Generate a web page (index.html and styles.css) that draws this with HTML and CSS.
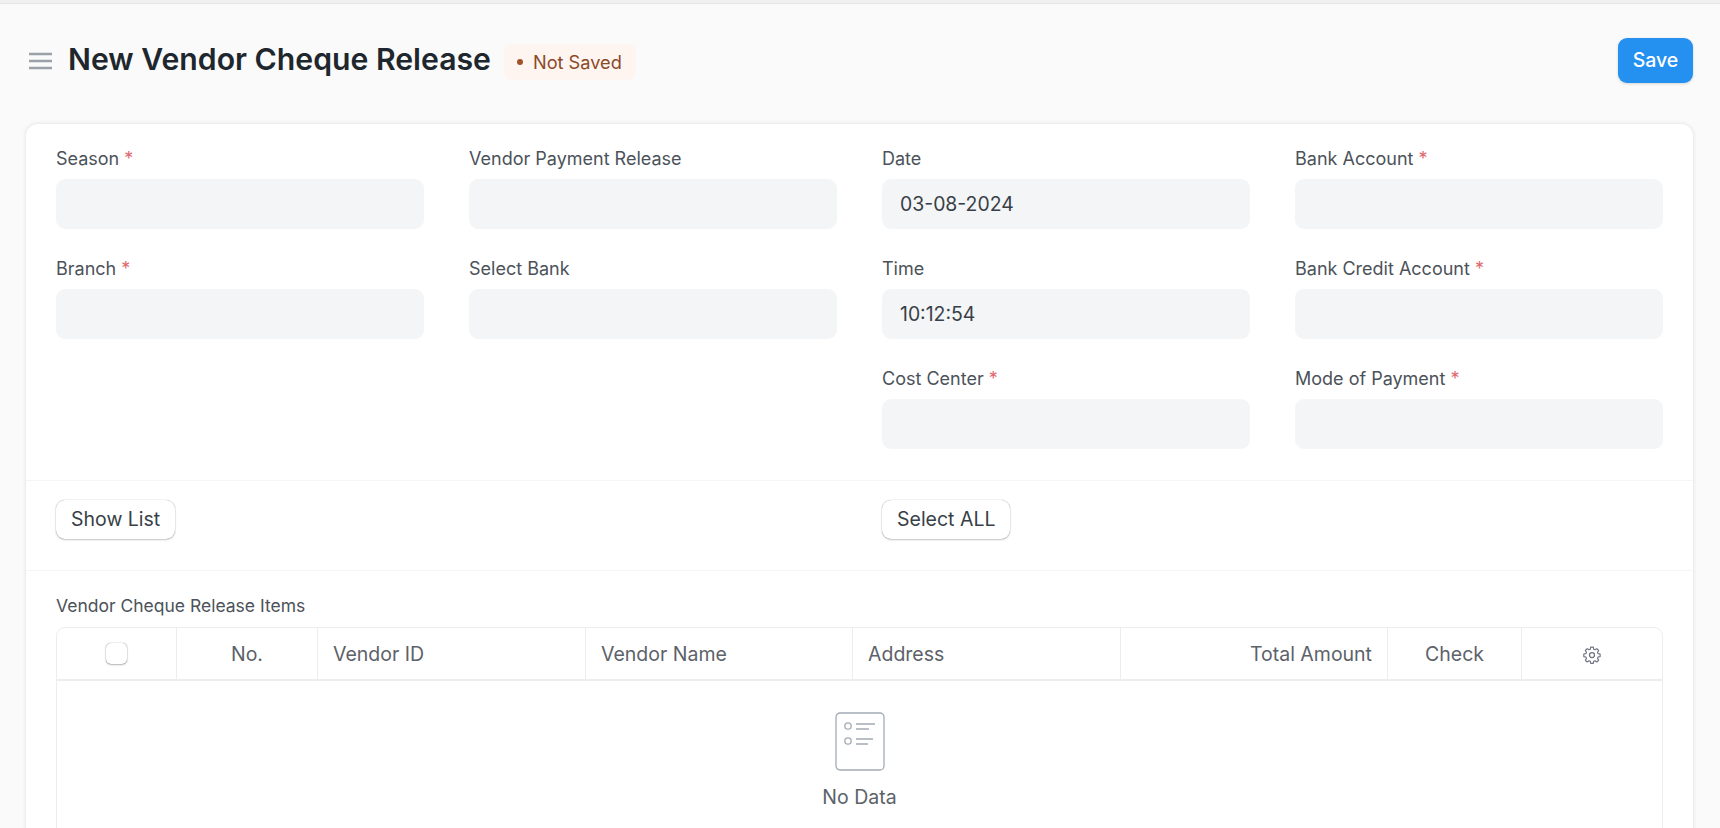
FILE: index.html
```html
<!DOCTYPE html>
<html lang="en">
<head>
    <meta charset="UTF-8">
    <title>New Vendor Cheque Release</title>
    <link rel="stylesheet" href="styles.css">
</head>
<body>
    <div class="navbar-edge"></div>
    <div class="page-head">
        <div class="title-group">
            <svg class="menu-icon" width="24" height="18" viewBox="0 0 24 18" fill="none" stroke="#9aa1a9" stroke-width="2.6">
                <path d="M0 2H23M0 9H23M0 16H23"/>
            </svg>
            <h1>New Vendor Cheque Release</h1>
            <span class="badge"><span class="dot"></span>Not Saved</span>
        </div>
        <button class="btn-primary">Save</button>
    </div>
    <div class="card">
        <div class="section form-grid">
            <div class="field"><label>Season <span class="req">*</span></label><div class="input"></div></div>
            <div class="field"><label>Vendor Payment Release</label><div class="input"></div></div>
            <div class="field"><label>Date</label><div class="input">03-08-2024</div></div>
            <div class="field"><label>Bank Account <span class="req">*</span></label><div class="input"></div></div>
            <div class="field"><label>Branch <span class="req">*</span></label><div class="input"></div></div>
            <div class="field"><label>Select Bank</label><div class="input"></div></div>
            <div class="field"><label>Time</label><div class="input">10:12:54</div></div>
            <div class="field"><label>Bank Credit Account <span class="req">*</span></label><div class="input"></div></div>
            <div class="field spacer"></div>
            <div class="field spacer"></div>
            <div class="field"><label>Cost Center <span class="req">*</span></label><div class="input"></div></div>
            <div class="field"><label>Mode of Payment <span class="req">*</span></label><div class="input"></div></div>
        </div>
        <div class="section button-row">
            <div><button class="btn">Show List</button></div>
            <div><button class="btn">Select ALL</button></div>
        </div>
        <div class="section items">
            <div class="items-label">Vendor Cheque Release Items</div>
            <div class="grid">
                <div class="grid-head">
                    <div class="cell center"><span class="checkbox"></span></div>
                    <div class="cell center">No.</div>
                    <div class="cell">Vendor ID</div>
                    <div class="cell">Vendor Name</div>
                    <div class="cell">Address</div>
                    <div class="cell right">Total Amount</div>
                    <div class="cell center">Check</div>
                    <div class="cell center">
                        <svg class="gear" width="20" height="20" viewBox="0 0 24 24" fill="none" stroke="#6b7280" stroke-width="1.5" stroke-linejoin="round">
                            <path d="M10.3 2.5h3.4l.5 2.7 1.8.8 2.3-1.5 2.4 2.4-1.5 2.3.7 1.8 2.7.5v3.4l-2.7.5-.7 1.8 1.5 2.3-2.4 2.4-2.3-1.5-1.8.7-.5 2.7h-3.4l-.5-2.7-1.8-.7-2.3 1.5-2.4-2.4 1.5-2.3-.8-1.8-2.7-.5v-3.4l2.7-.5.8-1.8-1.5-2.3 2.4-2.4 2.3 1.5 1.8-.8z" transform="translate(12 12) scale(.92) translate(-12 -12.8)"/>
                            <circle cx="12" cy="12" r="3"/>
                        </svg>
                    </div>
                </div>
                <div class="empty">
                    <svg width="50" height="59" viewBox="0 0 50 59" fill="none" stroke="#a3abb4" stroke-width="1.3">
                        <rect x="1" y="1" width="48" height="57" rx="4"/>
                        <circle cx="13" cy="14" r="3.2"/>
                        <circle cx="13" cy="29" r="3.2"/>
                        <path d="M21 12H40M21 17H34M21 27H38M21 32H33"/>
                    </svg>
                    <div class="empty-text">No Data</div>
                </div>
            </div>
        </div>
    </div>
</body>
</html>
```

FILE: styles.css
```css
* {
    box-sizing: border-box;
}

html, body {
    height: 100%;
}

body {
    margin: 0;
    overflow: hidden;
    font-family: Inter, "Noto Sans", sans-serif;
    background-color: #fafafa;
    color: #383f47;
}

.navbar-edge {
    height: 4px;
    background: #f0f0f0;
    border-bottom: 1px solid #e6e6e6;
}

.page-head {
    display: flex;
    justify-content: space-between;
    align-items: center;
    height: 120px;
    padding: 0 27px 7px 29px;
}

.title-group {
    display: flex;
    align-items: center;
}

.menu-icon {
    margin-right: 15px;
}

h1 {
    margin: 0 0 3px;
    font-size: 30.2px;
    font-weight: 600;
    color: #1f272e;
}

.badge {
    display: flex;
    align-items: center;
    height: 36px;
    margin-left: 13px;
    margin-top: 2px;
    padding: 0 14px 0 13px;
    background: #fff5f0;
    border-radius: 8px;
    color: #8a4a2a;
    font-size: 18.2px;
}

.dot {
    width: 6px;
    height: 6px;
    margin-right: 10px;
    border-radius: 50%;
    background: #a0522d;
}

.btn-primary {
    width: 75px;
    height: 45px;
    padding-bottom: 3px;
    border: none;
    border-radius: 9px;
    background-color: #2490ef;
    color: #fff;
    font-family: inherit;
    font-size: 19.5px;
    font-weight: 500;
    box-shadow: 0 1px 3px rgba(0, 0, 0, 0.15);
}

.card {
    margin: 0 27px 0 26px;
    background: #fff;
    border-radius: 12px;
    box-shadow: 0 0 4px rgba(0, 0, 0, 0.12);
}

.section {
    padding: 0 30px;
    border-bottom: 1px solid #f4f5f6;
}

.form-grid {
    display: grid;
    grid-template-columns: repeat(4, 368px);
    column-gap: 45px;
    align-content: start;
    padding-top: 22px;
    height: 357px;
}

.field {
    height: 110px;
}

label {
    display: block;
    height: 33px;
    padding-top: 1px;
    font-size: 18px;
    line-height: 24px;
    color: #4c5259;
}

.req {
    color: #e0686e;
}

.input {
    display: flex;
    align-items: center;
    height: 50px;
    padding: 0 18px;
    background: #f4f5f6;
    border-radius: 9px;
    font-size: 19.4px;
    color: #383f47;
}

.button-row {
    display: grid;
    grid-template-columns: 1fr 1fr;
    column-gap: 45px;
    align-items: start;
    padding-top: 19px;
    height: 90px;
}

.btn {
    height: 39px;
    padding: 0 15px 2px;
    background: #fff;
    border: none;
    border-radius: 9px;
    box-shadow: 0 0 1px rgba(0, 0, 0, 0.45), 0 1px 2px rgba(0, 0, 0, 0.2);
    color: #383f47;
    font-family: inherit;
    font-size: 19.5px;
}

.items {
    padding-top: 23px;
    border-bottom: none;
}

.items-label {
    height: 33px;
    font-size: 17.5px;
    line-height: 24px;
    color: #4c5259;
}

.grid {
    height: 400px;
    border: 1px solid #ebeef0;
    border-radius: 9px;
}

.grid-head {
    display: grid;
    grid-template-columns: 120px 141px 268px 267px 268px 267px 134px 1fr;
    height: 53px;
    border-bottom: 2px solid #ebeef0;
    font-size: 19.5px;
    color: #5c6269;
}

.cell {
    display: flex;
    align-items: center;
    padding: 0 15px;
    border-right: 1px solid #ebeef0;
}

.cell:last-child {
    border-right: none;
}

.center {
    justify-content: center;
}

.right {
    justify-content: flex-end;
}

.gear {
    margin-top: 2px;
}

.checkbox {
    width: 21px;
    height: 21px;
    background: #fff;
    border-radius: 5px;
    box-shadow: 0 0 1px rgba(0, 0, 0, 0.6), 0 1px 2px rgba(0, 0, 0, 0.25);
}

.empty {
    display: flex;
    flex-direction: column;
    align-items: center;
    padding-top: 31px;
}

.empty-text {
    margin-top: 14px;
    font-size: 19.5px;
    color: #5c6269;
}
```
